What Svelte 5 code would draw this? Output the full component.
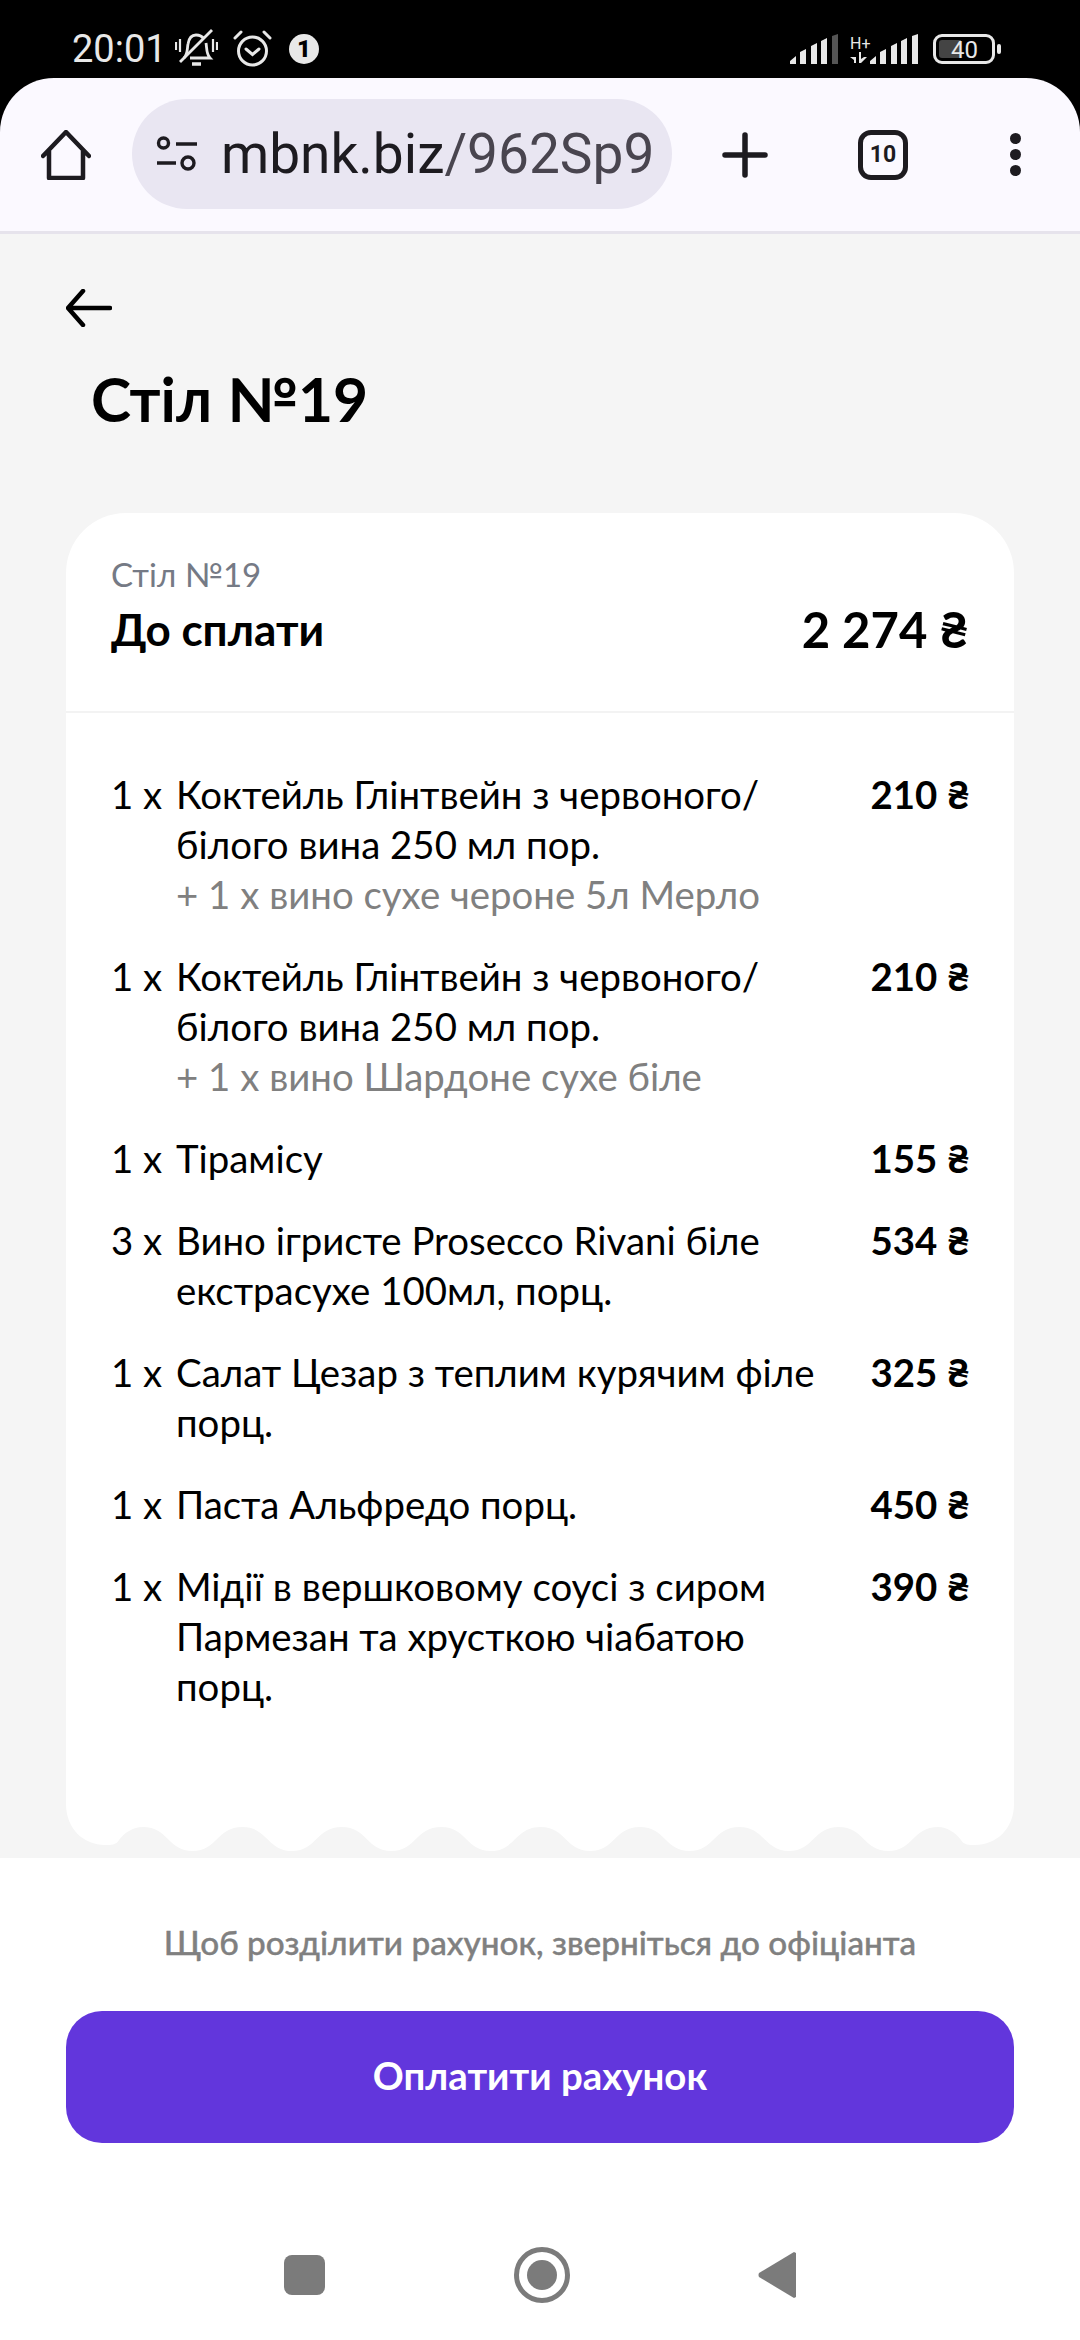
<script>
  const items = [
    { qty: 1, name: "Коктейль Глінтвейн з червоного/ білого вина 250 мл пор.", extra: "+ 1 х вино сухе чероне 5л Мерло", price: 210 },
    { qty: 1, name: "Коктейль Глінтвейн з червоного/ білого вина 250 мл пор.", extra: "+ 1 х вино Шардоне сухе біле", price: 210 },
    { qty: 1, name: "Тірамісу", price: 155 },
    { qty: 3, name: "Вино ігристе Prosecco Rivani біле екстрасухе 100мл, порц.", price: 534 },
    { qty: 1, name: "Салат Цезар з теплим курячим філе порц.", price: 325 },
    { qty: 1, name: "Паста Альфредо порц.", price: 450 },
    { qty: 1, name: "Мідії в вершковому соусі з сиром Пармезан та хрусткою чіабатою порц.", price: 390 },
  ];

  // bottom edge of the receipt, one bump every 99.4px
  function wavePath() {
    let d = "M0 0C0 25 18 41 39 41C45 41 50 41 53 36C58 29 67 23 77 23";
    let x = 77;
    for (let i = 0; i < 8; i++) {
      d += `C${x + 25} 23 ${x + 25} 47 ${x + 49.7} 47C${x + 74} 47 ${x + 74} 23 ${x + 99.4} 23`;
      x += 99.4;
    }
    d += "C881 23 890 29 895 36C898 41 903 41 909 41C930 41 948 25 948 0Z";
    return d;
  }
</script>

<div class="phone">
  <div class="status">
    <span class="time">20:01</span>
    <svg class="bell" width="43" height="38" viewBox="0 0 43 38" fill="none" stroke="#e8e8e8" stroke-width="2.8">
      <path d="M9 29c4-4 3-9 4-14 1-6 4-9 8-9 3 0 6 1 8 4M31 14c1 5 0 11 4 15H15" />
      <path d="M5 33 37 1" />
      <path d="M17 35h9" stroke-width="3.500" />
      <path d="M1 13v8M5 10v13M38 10v13M42 13v8" stroke-width="2.200" />
    </svg>
    <svg class="alarm" width="39" height="37" viewBox="0 0 39 37" fill="none" stroke="#e8e8e8">
      <circle cx="19.500" cy="21" r="14" stroke-width="3" />
      <path d="m13 19 6.500 5.500 6.500-5.500M2 8l6-6M37 8l-6-6" stroke-width="3" stroke-linecap="round" />
    </svg>
    <span class="badge">1</span>
    <span class="spacer"></span>
    <svg class="bars" width="48" height="30" viewBox="0 0 48 30" fill="#e8e8e8">
      <path d="M0 30v-3l6-5v8zM10 30V18l6-3v15zM21 30V12l6-3v21zM31 30V7l6-3v26z" />
      <path d="M42 30V2l6-2v30z" fill="#555" />
    </svg>
    <div class="net">
      <span>H+</span>
      <svg width="17" height="11" viewBox="0 0 17 11" fill="#e8e8e8"><path d="M0 5h6v6h-2v-3zM9 0h2v7l3-2h3l-6 6H9z" /></svg>
    </div>
    <svg class="bars second" width="48" height="30" viewBox="0 0 48 30" fill="#e8e8e8">
      <path d="M0 30v-3l6-5v8zM10 30V18l6-3v15zM21 30V12l6-3v21zM31 30V7l6-3v26zM42 30V2l6-2v30z" />
    </svg>
    <div class="battery">
      <div class="fill"></div>
      <span>40</span>
    </div>
    <span class="nub"></span>
  </div>

  <div class="browser">
    <svg width="50" height="50" viewBox="0 0 50 50" fill="none" stroke="#1d1b20" stroke-width="4.500" stroke-linejoin="round" stroke-linecap="round">
      <path d="M2 26 25 2l23 24M8 21v27h34V21" />
    </svg>
    <div class="url">
      <svg width="42" height="36" viewBox="0 0 42 36" fill="none" stroke="#1d1b20" stroke-width="3.400">
        <circle cx="7.500" cy="7" r="5" />
        <circle cx="32" cy="27" r="6" />
        <path d="M20 8h21M1 27h19" />
      </svg>
      <span class="addr"><b>mbnk.biz</b>/962Sp9</span>
    </div>
    <svg class="plus" width="46" height="46" viewBox="0 0 46 46" stroke="#1d1b20" stroke-width="5.500" stroke-linecap="round">
      <path d="M23 3v40M3 23h40" />
    </svg>
    <div class="tabs">10</div>
    <div class="dots"><i></i><i></i><i></i></div>
  </div>

  <main>
    <svg class="back" width="46" height="38" viewBox="0 0 46 38" fill="none" stroke="#000" stroke-width="4.500" stroke-linecap="round" stroke-linejoin="round">
      <path d="M44 19H3M17 2 2 19l15 17" />
    </svg>
    <h1>Стіл №19</h1>

    <div class="card">
      <div class="head">
        <div class="table">Стіл №19</div>
        <div class="total">
          <span>До сплати</span>
          <span class="sum">2 274 ₴</span>
        </div>
      </div>
      <div class="list">
        {#each items as item}
          <div class="row">
            <span class="qty">{item.qty} х</span>
            <div class="name">
              {item.name}
              {#if item.extra}
                <div class="extra">{item.extra}</div>
              {/if}
            </div>
            <span class="price">{item.price} ₴</span>
          </div>
        {/each}
      </div>
      <svg class="wave" width="948" height="47" viewBox="0 0 948 47"><path d={wavePath()} fill="#fff" /></svg>
    </div>
  </main>

  <div class="footer">
    <p>Щоб розділити рахунок, зверніться до офіціанта</p>
    <button>Оплатити рахунок</button>
    <div class="nav">
      <span class="square"></span>
      <span class="home"><i></i></span>
      <svg width="38" height="46" viewBox="0 0 38 46" fill="#7b7b7b"><path d="M36 0 1 21q-1 2 0 4l35 21 2-1V1z" /></svg>
    </div>
  </div>
</div>

<style>
  :global(body) {
    margin: 0;
    background: #000;
  }

  .phone {
    width: 1080px;
    height: 2340px;
    display: flex;
    flex-direction: column;
    overflow: hidden;
    font-family: Lato, "Noto Sans", sans-serif;
    background: #000;
  }

  .status {
    height: 78px;
    display: flex;
    align-items: center;
    padding: 20px 79px 0 72px;
    box-sizing: border-box;
    color: #e8e8e8;
    font-family: Roboto, sans-serif;
  }

  .time {
    font-size: 38px;
    width: 103px;
  }

  .bell,
  .alarm {
    margin-top: -2px;
  }

  .alarm {
    margin-left: 15px;
  }

  .badge {
    width: 30px;
    height: 30px;
    margin-left: 17px;
    border-radius: 50%;
    background: #e8e8e8;
    color: #000;
    font-size: 24px;
    font-weight: 900;
    line-height: 30px;
    text-align: center;
  }

  .spacer {
    flex: 1;
  }

  .net {
    width: 20px;
    margin-left: 12px;
    display: flex;
    flex-direction: column;
    font-size: 16px;
    line-height: 17px;
    white-space: nowrap;
  }

  .second {
    margin-left: 0;
  }

  .battery {
    width: 62px;
    height: 30px;
    margin-left: 15px;
    border: 3px solid #e8e8e8;
    border-radius: 9px;
    box-sizing: border-box;
    padding: 3px;
    position: relative;
    font-size: 24px;
  }

  .fill {
    width: 22px;
    height: 18px;
    background: #444;
    border-radius: 3px 0 0 3px;
  }

  .battery span {
    position: absolute;
    left: 15px;
    top: -2px;
    line-height: 30px;
  }

  .nub {
    width: 4px;
    height: 10px;
    margin-left: 2px;
    border-radius: 2px;
    background: #e8e8e8;
  }

  .browser {
    height: 156px;
    display: flex;
    align-items: center;
    padding: 0 42px 0 41px;
    box-sizing: border-box;
    background: #fbf9ff;
    border-bottom: 3px solid #e6e3ec;
    border-radius: 54px 54px 0 0;
  }

  .url {
    width: 540px;
    height: 110px;
    margin-left: 41px;
    padding-left: 24px;
    box-sizing: border-box;
    display: flex;
    align-items: center;
    gap: 23px;
    background: #e9e6f2;
    border-radius: 55px;
    margin-top: -1px;
  }

  .addr {
    font-family: Roboto, sans-serif;
    font-size: 55px;
    color: #49454f;
    white-space: nowrap;
  }

  .addr b {
    font-weight: 400;
    color: #1d1b20;
  }

  .plus {
    margin-left: 50px;
  }

  .tabs {
    width: 50px;
    height: 50px;
    margin-left: 90px;
    box-sizing: border-box;
    border: 5px solid #1d1b20;
    border-radius: 13px;
    color: #1d1b20;
    font-family: Roboto, sans-serif;
    font-size: 23px;
    font-weight: 700;
    line-height: 40px;
    text-align: center;
  }

  .dots {
    margin-left: 102px;
    display: flex;
    flex-direction: column;
    gap: 5px;
  }

  .dots i {
    width: 11px;
    height: 11px;
    border-radius: 50%;
    background: #1d1b20;
  }

  main {
    flex: 1;
    min-height: 0;
    padding: 55px 66px 0;
    background: #f5f5f5;
    display: flex;
    flex-direction: column;
    align-items: flex-start;
  }

  h1 {
    margin: 36px 0 0 25px;
    font-size: 60.500px;
    font-weight: 700;
    line-height: 72px;
    color: #000;
  }

  .card {
    width: 948px;
    margin-top: 78px;
  }

  .head {
    background: #fff;
    border-radius: 60px 60px 0 0;
    padding: 42px 45px 0;
    height: 200px;
    box-sizing: border-box;
    border-bottom: 2px solid #f3f3f3;
  }

  .table {
    font-size: 33px;
    line-height: 38px;
    color: #757a85;
  }

  .total {
    display: flex;
    justify-content: space-between;
    margin-top: 9px;
    font-size: 44px;
    font-weight: 700;
    line-height: 54px;
    color: #000;
  }

  .sum {
    font-size: 49px;
  }

  .list {
    background: #fff;
    padding: 56px 44px 93px 45px;
    display: flex;
    flex-direction: column;
    gap: 32px;
  }

  .row {
    display: flex;
    font-size: 38.400px;
    line-height: 50px;
    color: #000;
  }

  .qty {
    width: 65px;
    flex: none;
  }

  .name {
    flex: 1;
    padding-right: 25px;
  }

  .extra {
    color: #808080;
  }

  .price {
    flex: none;
    width: 100px;
    text-align: right;
    font-weight: 700;
    white-space: nowrap;
  }

  .wave {
    display: block;
  }

  .footer {
    height: 482px;
    flex: none;
    background: #fff;
    display: flex;
    flex-direction: column;
    align-items: center;
  }

  .footer p {
    margin: 64px 0 0;
    font-size: 33.300px;
    font-weight: 500;
    line-height: 40px;
    color: #808080;
    -webkit-text-stroke: 0.4px #808080;
  }

  button {
    width: 948px;
    height: 132px;
    margin-top: 49px;
    padding: 0 0 4px;
    border: 0;
    border-radius: 36px;
    background: #6236dc;
    color: #fff;
    font-family: inherit;
    font-size: 38.400px;
    font-weight: 700;
  }

  .nav {
    width: 512px;
    margin-top: 104px;
    display: flex;
    align-items: center;
    justify-content: space-between;
  }

  .square {
    width: 41px;
    height: 40px;
    border-radius: 8px;
    background: #7b7b7b;
  }

  .home {
    width: 56px;
    height: 56px;
    box-sizing: border-box;
    border: 5px solid #7b7b7b;
    border-radius: 50%;
    display: flex;
    align-items: center;
    justify-content: center;
  }

  .home i {
    width: 30px;
    height: 30px;
    border-radius: 50%;
    background: #7b7b7b;
  }
</style>
